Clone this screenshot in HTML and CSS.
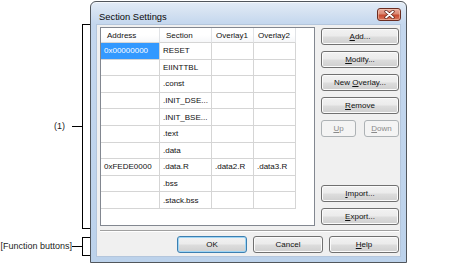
FILE: index.html
```html
<!DOCTYPE html>
<html lang="en">
<head>
<meta charset="utf-8">
<title>Section Settings</title>
<link rel="stylesheet" href="styles.css">
</head>
<body>
<div class="page">
  <div class="annotations">
    <div class="anno anno-main">
      <span class="anno-label anno-label-gap">(1)</span><span class="anno-tick"></span><span class="anno-brace"></span>
    </div>
    <div class="anno anno-func">
      <span class="anno-label">[Function buttons]</span><span class="anno-tick"></span><span class="anno-brace"></span>
    </div>
  </div>

  <div class="window">
    <div class="titlebar">
      <span class="title">Section Settings</span>
      <button class="close" type="button" aria-label="Close">
        <svg width="11" height="9" viewBox="0 0 11 9">
          <path d="M2 1.5 L9 7.5 M9 1.5 L2 7.5" stroke="#5a1f14" stroke-width="3.2" stroke-linecap="round"/>
          <path d="M2 1.5 L9 7.5 M9 1.5 L2 7.5" stroke="#ffffff" stroke-width="1.8" stroke-linecap="round"/>
        </svg>
      </button>
    </div>

    <div class="client">
      <div class="main">
        <div class="list">
          <div class="grid">
            <div class="hcell hcell-wide">Address</div>
            <div class="hcell hcell-wide">Section</div>
            <div class="hcell">Overlay1</div>
            <div class="hcell">Overlay2</div>

            <div class="cell cell-selected">0x00000000</div><div class="cell">RESET</div><div class="cell"></div><div class="cell"></div>
            <div class="cell"></div><div class="cell">EIINTTBL</div><div class="cell"></div><div class="cell"></div>
            <div class="cell"></div><div class="cell">.const</div><div class="cell"></div><div class="cell"></div>
            <div class="cell"></div><div class="cell">.INIT_DSE...</div><div class="cell"></div><div class="cell"></div>
            <div class="cell"></div><div class="cell">.INIT_BSE...</div><div class="cell"></div><div class="cell"></div>
            <div class="cell"></div><div class="cell">.text</div><div class="cell"></div><div class="cell"></div>
            <div class="cell"></div><div class="cell">.data</div><div class="cell"></div><div class="cell"></div>
            <div class="cell">0xFEDE0000</div><div class="cell">.data.R</div><div class="cell">.data2.R</div><div class="cell">.data3.R</div>
            <div class="cell"></div><div class="cell">.bss</div><div class="cell"></div><div class="cell"></div>
            <div class="cell"></div><div class="cell">.stack.bss</div><div class="cell"></div><div class="cell"></div>
          </div>
        </div>

        <div class="side">
          <div class="btn-stack">
            <button class="btn" type="button"><u>A</u>dd...</button>
            <button class="btn" type="button"><u>M</u>odify...</button>
            <button class="btn" type="button">New <u>O</u>verlay...</button>
            <button class="btn" type="button"><u>R</u>emove</button>
            <div class="btn-pair">
              <button class="btn btn-small" type="button" disabled><u>U</u>p</button>
              <button class="btn btn-small" type="button" disabled><u>D</u>own</button>
            </div>
          </div>
          <div class="btn-stack">
            <button class="btn" type="button"><u>I</u>mport...</button>
            <button class="btn" type="button"><u>E</u>xport...</button>
          </div>
        </div>
      </div>

      <div class="separator"></div>

      <div class="footer">
        <button class="btn btn-footer btn-default" type="button">OK</button>
        <button class="btn btn-footer" type="button">Cancel</button>
        <button class="btn btn-footer" type="button"><u>H</u>elp</button>
      </div>
    </div>
  </div>
</div>
</body>
</html>
```

FILE: styles.css
```css
html, body {
  margin: 0;
  padding: 0;
  background: #ffffff;
}

body {
  font-family: "Liberation Sans", Arial, sans-serif;
  color: #111;
}

.page {
  display: flex;
  width: 474px;
  height: 265px;
}

/* ---------- annotations ---------- */
.annotations {
  width: 90px;
  flex: none;
  display: flex;
  flex-direction: column;
  padding-top: 24px;
  box-sizing: border-box;
}

.anno {
  display: flex;
  align-items: center;
}

.anno-main {
  height: 205px;
}

.anno-func {
  height: 19px;
  margin-top: 8px;
}

.anno-label {
  width: 72px;
  flex: none;
  box-sizing: border-box;
  text-align: right;
  font-size: 9px;
  line-height: 11px;
  color: #1c1c1c;
  white-space: nowrap;
}

.anno-label-gap {
  padding-right: 7px;
}

.anno-tick {
  width: 10px;
  height: 1px;
  flex: none;
  background: #000;
}

.anno-brace {
  width: 8px;
  height: 100%;
  flex: none;
  box-sizing: border-box;
  border: 1px solid #000;
  border-right: 0;
}

/* ---------- window ---------- */
.window {
  width: 317px;
  height: 262px;
  margin-top: 1px;
  flex: none;
  box-sizing: border-box;
  border: 1px solid #51565c;
  border-radius: 6px 6px 0 0;
  padding: 0 5px 5px;
  display: flex;
  flex-direction: column;
  background: linear-gradient(180deg, #e3ecf7 0px, #d2e0f1 12px, #c4d7ee 22px, #bcd2eb 100%);
  box-shadow: inset 0 1px 0 #f4f8fc;
}

.titlebar {
  height: 22px;
  flex: none;
  display: flex;
  align-items: flex-start;
  justify-content: space-between;
  padding-left: 3px;
}

.title {
  font-size: 9.4px;
  line-height: 11px;
  margin-top: 9px;
  color: #0a0a0a;
}

.close {
  width: 24px;
  height: 13px;
  margin-top: 6px;
  padding: 0;
  box-sizing: border-box;
  border: 1px solid #6b2d21;
  border-radius: 3px;
  background: linear-gradient(180deg, #e9a99a 0%, #dc8a73 45%, #c84a2f 55%, #d8775c 100%);
  box-shadow: inset 0 0 0 1px rgba(255, 220, 200, 0.45);
  display: flex;
  align-items: center;
  justify-content: center;
}

.close svg {
  display: block;
}

/* ---------- client ---------- */
.client {
  flex: 1;
  box-sizing: border-box;
  background: #f0f0f0;
  border: 1px solid #b4c6dc;
  padding: 2px 1px 3px 3px;
  display: flex;
  flex-direction: column;
}

.main {
  height: 199px;
  flex: none;
  display: flex;
  gap: 6px;
}

/* ---------- list ---------- */
.list {
  width: 215px;
  flex: none;
  box-sizing: border-box;
  border: 1px solid #828790;
  background: #ffffff;
}

.grid {
  display: grid;
  grid-template-columns: 59px 52px 42px 42px;
  grid-template-rows: 15px;
  grid-auto-rows: 16.6px;
  width: 195px;
  font-size: 8px;
}

.hcell,
.cell {
  box-sizing: border-box;
  border-right: 1px solid #d5d5d5;
  border-bottom: 1px solid #d5d5d5;
  display: flex;
  align-items: center;
  white-space: nowrap;
  overflow: hidden;
  color: #111;
}

.hcell {
  padding-left: 4px;
  background: linear-gradient(180deg, #ffffff 0%, #ffffff 50%, #f6f7f9 100%);
  border-right-color: #e1e3e6;
  border-bottom-color: #d5d5d5;
}

.hcell-wide {
  padding-left: 6px;
}

.cell {
  padding-left: 3px;
}

.cell-selected {
  background: #3399ff;
  color: #ffffff;
}

/* ---------- buttons ---------- */
.side {
  width: 78px;
  flex: none;
  display: flex;
  flex-direction: column;
  justify-content: space-between;
  padding: 1px 0;
  box-sizing: border-box;
}

.btn-stack {
  display: flex;
  flex-direction: column;
  gap: 6px;
}

.btn-pair {
  display: flex;
  justify-content: space-between;
}

.btn {
  height: 17px;
  padding: 0;
  box-sizing: border-box;
  border: 1px solid #707070;
  border-radius: 3px;
  background: linear-gradient(180deg, #f2f2f2 0%, #ebebeb 48%, #dddddd 52%, #cfcfcf 100%);
  box-shadow: inset 0 0 0 1px #fbfbfb;
  font-family: "Liberation Sans", Arial, sans-serif;
  font-size: 8px;
  line-height: 13px;
  color: #111;
  text-align: center;
}

.btn u {
  text-decoration-thickness: 1px;
  text-underline-offset: 1px;
}

.btn-small {
  width: 35px;
}

.btn:disabled {
  border-color: #adb2b5;
  background: #f4f4f4;
  box-shadow: none;
  color: #8a8a8a;
}

.separator {
  height: 2px;
  flex: none;
  margin-top: 4px;
  box-sizing: border-box;
  border-top: 1px solid #a0a0a0;
  border-bottom: 1px solid #ffffff;
}

.footer {
  margin-top: 4px;
  display: flex;
  justify-content: flex-end;
  gap: 6px;
}

.btn-footer {
  width: 70px;
}

.btn-default {
  border-color: #3c7fb1;
  box-shadow: inset 0 0 0 1px #9fd5f4;
}
```
